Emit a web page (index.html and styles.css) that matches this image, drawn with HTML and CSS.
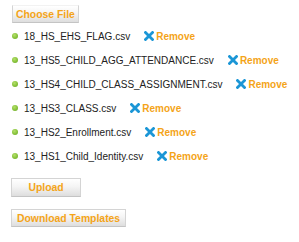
FILE: index.html
```html
<!DOCTYPE html>
<html>
<head>
<meta charset="utf-8">
<link rel="stylesheet" href="styles.css">
</head>
<body>
<div class="page">
  <div class="top"><span class="btn btn-choose">Choose File</span></div>
  <ul class="files">
    <li class="file"><span class="dot"></span><span class="name">18_HS_EHS_FLAG.csv</span><a class="remove"><svg class="x" viewBox="0 0 10 10"><path d="M1.5 1.5L8.5 8.5M8.5 1.5L1.5 8.5"/></svg>Remove</a></li>
    <li class="file"><span class="dot"></span><span class="name">13_HS5_CHILD_AGG_ATTENDANCE.csv</span><a class="remove"><svg class="x" viewBox="0 0 10 10"><path d="M1.5 1.5L8.5 8.5M8.5 1.5L1.5 8.5"/></svg>Remove</a></li>
    <li class="file"><span class="dot"></span><span class="name">13_HS4_CHILD_CLASS_ASSIGNMENT.csv</span><a class="remove"><svg class="x" viewBox="0 0 10 10"><path d="M1.5 1.5L8.5 8.5M8.5 1.5L1.5 8.5"/></svg>Remove</a></li>
    <li class="file"><span class="dot"></span><span class="name">13_HS3_CLASS.csv</span><a class="remove"><svg class="x" viewBox="0 0 10 10"><path d="M1.5 1.5L8.5 8.5M8.5 1.5L1.5 8.5"/></svg>Remove</a></li>
    <li class="file"><span class="dot"></span><span class="name">13_HS2_Enrollment.csv</span><a class="remove"><svg class="x" viewBox="0 0 10 10"><path d="M1.5 1.5L8.5 8.5M8.5 1.5L1.5 8.5"/></svg>Remove</a></li>
    <li class="file"><span class="dot"></span><span class="name">13_HS1_Child_Identity.csv</span><a class="remove"><svg class="x" viewBox="0 0 10 10"><path d="M1.5 1.5L8.5 8.5M8.5 1.5L1.5 8.5"/></svg>Remove</a></li>
  </ul>
  <div class="actions">
    <span class="btn btn-upload">Upload</span>
    <span class="btn btn-download">Download Templates</span>
  </div>
</div>
</body>
</html>
```

FILE: styles.css
```css
html, body {
  margin: 0;
  padding: 0;
  background: #fff;
}
.page {
  padding: 5px 0 0 11px;
  font-family: "Liberation Sans", Arial, sans-serif;
}
.btn {
  display: inline-flex;
  align-items: center;
  justify-content: center;
  box-sizing: border-box;
  height: 18px;
  padding: 0 4px;
  white-space: nowrap;
  font-size: 10.4px;
  font-weight: bold;
  color: #f4a418;
  background: linear-gradient(#ffffff 0%, #f4f4f4 45%, #dedede 100%);
  border: 1px solid #d4d4d4;
  border-bottom-color: #c4c4c4;
}
.top {
  display: flex;
}
.btn-choose {
  padding: 0 3px;
  margin-left: 1px;
  border-top-color: #f2f2f2;
}
.files {
  list-style: none;
  margin: 1px 0 0 0;
  padding: 0;
}
.file {
  display: flex;
  align-items: center;
  height: 24px;
  font-size: 10px;
  color: #222;
}
.dot {
  width: 6px;
  height: 6px;
  border-radius: 50%;
  background: radial-gradient(circle at 40% 35%, #b5e06a 0%, #86c23a 55%, #6aa229 100%);
  margin: 0 6px 0 1px;
  flex: none;
}
.name {
  white-space: nowrap;
}
.remove {
  display: flex;
  align-items: center;
  margin-left: 14px;
  font-weight: bold;
  color: #f4a418;
  white-space: nowrap;
}
.x {
  width: 10px;
  height: 10px;
  margin-right: 2px;
  fill: none;
  stroke: #1b96d6;
  stroke-width: 2.8;
  stroke-linecap: square;
}
.actions {
  display: flex;
  flex-direction: column;
  align-items: flex-start;
  gap: 12px;
  margin-top: 10px;
}
.btn-upload {
  width: 70px;
  height: 19px;
}
.btn-download {
  padding: 0 5px;
}
```
